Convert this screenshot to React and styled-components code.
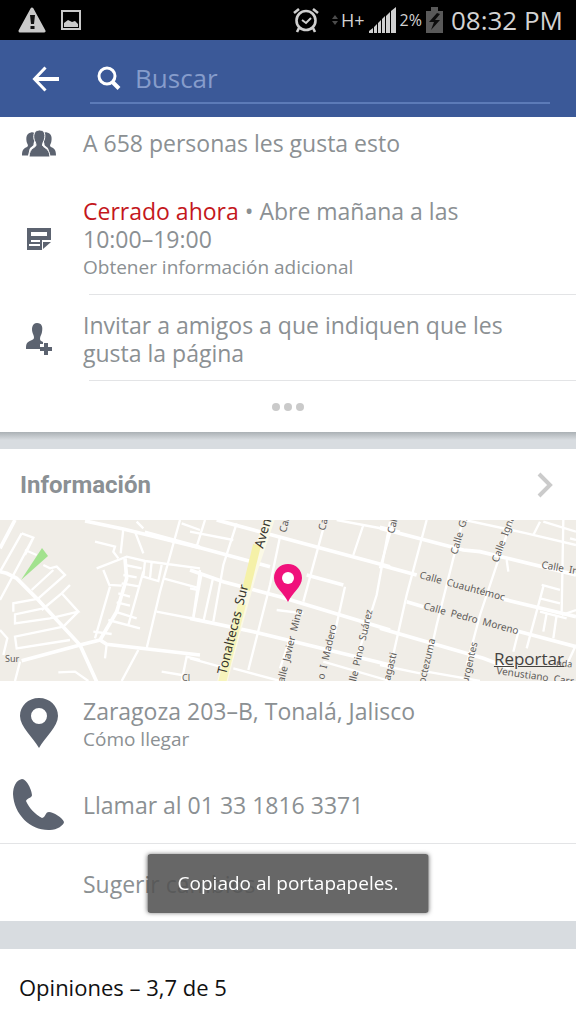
import React from "react";
import styled, { createGlobalStyle } from "styled-components";

const GlobalStyle = createGlobalStyle`
  *, *::before, *::after { box-sizing: border-box; }
  body {
    margin: 0;
    background: #fff;
    color: #8b9093;
    font-family: "Open Sans", "Noto Sans", sans-serif;
  }
  button, input { font: inherit; color: inherit; }
`;

const Screen = styled.div`
  display: flex;
  flex-direction: column;
  min-height: 100vh;
`;

const StatusBar = styled.div`
  display: flex;
  align-items: center;
  justify-content: space-between;
  height: 40px;
  padding: 0 13px 0 18px;
  background: #000;
  color: #d2d2d2;
`;

const StatusGroup = styled.div`
  display: flex;
  align-items: center;
  gap: ${(p) => p.$gap};
`;

const StatusText = styled.span`
  font-size: ${(p) => p.$size};
  line-height: 40px;
  white-space: nowrap;
`;

const Clock = styled(StatusText)`
  margin-left: 4px;
`;

const Toolbar = styled.header`
  display: flex;
  align-items: center;
  height: 77px;
  padding: 0 26px 0 32px;
  background: #3b5998;
  color: #fff;
`;

const IconButton = styled.button`
  display: flex;
  padding: 0;
  border: 0;
  background: none;
  color: ${(p) => p.$color || "inherit"};
`;

const SearchBox = styled.label`
  display: flex;
  flex: 1;
  align-items: center;
  gap: 14px;
  height: 50px;
  margin-left: 30px;
  padding-left: 7px;
  border-bottom: 2px solid #5c7bb8;
`;

const SearchInput = styled.input`
  flex: 1;
  min-width: 0;
  padding: 0;
  border: 0;
  outline: 0;
  background: none;
  color: #fff;
  font-size: 26px;
  line-height: 32px;
  &::placeholder { color: #869ccb; opacity: 1; }
`;

const Card = styled.section`
  background: #fff;
`;

const Separator = styled.div`
  height: ${(p) => p.$height};
  background: ${(p) => (p.$shadow ? "linear-gradient(#abb1b5, #d8dce0 8px)" : "#d8dce0")};
`;

const Row = styled.div`
  display: flex;
  align-items: ${(p) => p.$align || "center"};
  padding: ${(p) => p.$pad || "12px 20px 14px 0"};
`;

const IconCell = styled.div`
  display: flex;
  flex: none;
  justify-content: center;
  width: 77px;
  margin-right: 6px;
  color: #5c6370;
`;

const Lines = styled.div`
  flex: 1;
  min-width: 0;
`;

const Text = styled.p`
  max-width: 450px;
  margin: 0;
  font-size: 23px;
  line-height: 28px;
`;

const Closed = styled.span`
  color: #c4171c;
`;

const Hours = styled.span`
  white-space: nowrap;
`;

const SmallLink = styled.a`
  display: block;
  color: inherit;
  font-size: 19px;
  line-height: 29px;
  text-decoration: none;
`;

const Divider = styled.hr`
  height: 1px;
  margin: 0 0 0 ${(p) => p.$inset || "0"};
  border: 0;
  background: #e3e4e6;
`;

const MoreButton = styled.button`
  display: flex;
  align-items: center;
  justify-content: center;
  gap: 4px;
  width: 100%;
  height: 51px;
  padding: 0;
  border: 0;
  background: none;
`;

const Dot = styled.span`
  width: 8px;
  height: 8px;
  border-radius: 50%;
  background: #cacaca;
`;

const CardHeader = styled.div`
  display: flex;
  align-items: center;
  justify-content: space-between;
  height: 71px;
  padding: 0 22px 0 20px;
`;

const CardTitle = styled.h2`
  margin: 0;
  color: #8b9094;
  font-family: Roboto, sans-serif;
  font-size: 24px;
  font-weight: 700;
  line-height: 28px;
`;

const MapFrame = styled.div`
  position: relative;
  background: #f0ede7;
`;

const MapDrawing = styled.svg`
  display: block;
  width: 100%;
  height: auto;
  font-family: "Noto Sans", sans-serif;
`;

const MapLabel = styled.text`
  white-space: pre;
`;

const ReportLink = styled.a`
  position: absolute;
  right: 12px;
  bottom: 12px;
  color: #44423f;
  font-size: 17px;
  line-height: 20px;
`;

const Opinions = styled.h2`
  margin: 0;
  padding: 24px 19px;
  color: #111;
  font-size: 22px;
  font-weight: 400;
  line-height: 28px;
`;

const Toast = styled.div`
  position: fixed;
  bottom: 111px;
  left: 50%;
  padding: 15px 30px;
  border-radius: 3px;
  background: rgba(82, 82, 82, 0.88);
  box-shadow: 0 0 4px rgba(0, 0, 0, 0.5);
  color: #fff;
  font-size: 19px;
  line-height: 29px;
  white-space: nowrap;
  transform: translateX(-50%);
`;

const WarningIcon = () => (
  <svg width="28" height="28" viewBox="0 0 28 28" aria-hidden="true">
    <path d="M14 3 26 25H2Z" fill="#c9c9c9" stroke="#c9c9c9" strokeWidth="3" strokeLinejoin="round" />
    <path d="M12 9h5l-1 9h-3ZM12.500 20h4v3h-4Z" fill="#111" />
  </svg>
);

const PictureIcon = () => (
  <svg width="20" height="20" viewBox="0 0 20 20" aria-hidden="true">
    <rect x="1" y="1" width="18" height="18" fill="none" stroke="#c9c9c9" strokeWidth="2" />
    <path d="M3 17v-4l4-3 4 2 3-1 3 3v3Z" fill="#c9c9c9" />
  </svg>
);

const AlarmIcon = () => (
  <svg width="26" height="26" viewBox="0 0 26 26" fill="none" stroke="#cfcfcf" aria-hidden="true">
    <circle cx="13" cy="13.500" r="9.500" strokeWidth="2.600" />
    <path d="m9 13 4 3 5-5" strokeWidth="2" />
    <path d="m1 6 5-4M25 6l-5-4M6 21l-2 4M20 21l2 4" strokeWidth="2.600" />
  </svg>
);

const DataIcon = () => (
  <svg width="8" height="12" viewBox="0 0 8 12" fill="#4c4c4c" aria-hidden="true">
    <path d="M1 5 4 1l3 4ZM1 7h6l-3 4Z" />
  </svg>
);

const SignalIcon = () => (
  <svg width="27" height="26" viewBox="0 0 27 26" fill="#d0d0d0" aria-hidden="true">
    <path d="M0 26v-2l4-3v5ZM5 26v-6l3-3v9ZM9 26V16l3-3v13ZM13 26V12l3-3v17ZM17 26V9l4-4v21ZM22 26V4l5-4v26Z" />
  </svg>
);

const BatteryIcon = () => (
  <svg width="17" height="26" viewBox="0 0 17 26" aria-hidden="true">
    <path d="M5 0h7v4h5v22H0V4h5Z" fill="#595959" />
    <path d="m11 6-8 9h5l-3 8 9-10H9l5-6Z" fill="#0c0c0c" />
  </svg>
);

const BackIcon = () => (
  <svg width="28" height="26" viewBox="0 0 28 26" fill="none" stroke="currentColor" strokeWidth="3" aria-hidden="true">
    <path d="M3 13h24" strokeWidth="4" />
    <path d="M13.500 1.500 2.500 13l11 11.500" />
  </svg>
);

const SearchIcon = () => (
  <svg width="24" height="24" viewBox="0 0 24 24" fill="none" stroke="#fff" aria-hidden="true">
    <circle cx="10" cy="10" r="8" strokeWidth="3" />
    <path d="m15.500 16 6.500 6.500" strokeWidth="4" />
  </svg>
);

const GroupIcon = () => (
  <svg width="34" height="27" viewBox="0 0 34 27" fill="currentColor" aria-hidden="true">
    <path d="M9 2.500c4-1 5 3 4 7-.6 2-1.500 3-1.500 5 0 2-4 2-4.500 7l-1 4H0c0-6 2-7 5-8.500 1.500-1 1-2 0-4C3.500 8 4.500 3 9 2.500ZM25 2.500c-4-1-5 3-4 7 .6 2 1.500 3 1.500 5 0 2 4 2 4.500 7l1 4h6c0-6-2-7-5-8.500-1.500-1-1-2 0-4C30.500 8 29.500 3 25 2.500Z" />
    <path d="M17.500 0c5 0 6 4 5 9-.5 2-2 4-2 6 0 3 7 2 7.500 12H7c.5-10 7-9 7-12 0-2-1.500-4-2-6-1-5 1-9 5.500-9Z" stroke="#fff" strokeWidth="1" />
  </svg>
);

const NoteIcon = () => (
  <svg width="24" height="23" viewBox="0 0 24 23" aria-hidden="true">
    <path d="M0 0h24v12h-9v10H0Z" fill="currentColor" />
    <path d="M4 4h16v4H4ZM4 12h9v2H4ZM2 16h11v2H2Z" fill="#fff" />
    <path d="M16 14h8l-8 7Z" fill="currentColor" />
  </svg>
);

const InviteIcon = () => (
  <svg width="28" height="32" viewBox="0 0 28 32" fill="currentColor" aria-hidden="true">
    <path d="M12 0c5 0 6 4 5 9-.5 3-2 4-2 7 0 2 2 2 3 3v2h-3v5H1c0-6 1-7 6-9 3-1 2-4 1-6C6 6 7 0 12 0Z" />
    <path d="M19 20h4v4h4v4h-4v4h-4v-4h-4v-4h4Z" />
  </svg>
);

const PlaceIcon = () => (
  <svg width="40" height="52" viewBox="0 0 40 52" aria-hidden="true">
    <path
      d="M20 1C9 1 1 9 1 19c0 11 13 21 19 32 6-11 19-21 19-32C39 9 31 1 20 1Zm0 10a8 8 0 1 1 0 16 8 8 0 0 1 0-16Z"
      fill="currentColor"
      fillRule="evenodd"
    />
  </svg>
);

const PhoneIcon = () => (
  <svg width="52" height="52" viewBox="0 0 52 52" aria-hidden="true">
    <path
      d="M9 0C3 1 0 8 0 15c1 21 18 37 37 36 7 0 14-5 14-8-1-4-11-10-15-10-4 0-3 5-7 6-7-4-13-10-16-17 1-3 6-3 6-6C19 12 14 0 9 0Z"
      fill="currentColor"
    />
  </svg>
);

const ChevronIcon = () => (
  <svg width="18" height="26" viewBox="0 0 18 26" fill="none" stroke="currentColor" strokeWidth="4" aria-hidden="true">
    <path d="m3 2 11 11L3 24" />
  </svg>
);

// Road geometry is in thirds of a map unit, one list for each third of the map.
const ROADS = [
  {
    x: 0,
    wide: "M0 170 20 175 50 190 110 250 240 390 290 500M0 100 45 15M255 18 370 42 600 98M65 437 240 390 300 375 320 388 600 420M300 375 280 380M300 375 350 290 380 190 375 130",
    thin: "M65 55 100 68 75 120M65 55 0 170M100 68 0 255M75 105 110 120M130 150 150 160 170 155 195 180 115 250M95 225 160 165M185 235 235 290 150 310 45 325 45 298 130 280M185 235 125 285M210 210 185 235M120 250 40 265 40 290M190 335 45 365 50 400 210 375M235 290 190 335M0 345 22 370 10 420M60 440 45 498M265 498 225 470 175 472M285 80 345 95 340 110 355 130M290 160 380 125 435 138 600 160M370 42 362 115M405 50 430 115M430 40 410 20M375 150 425 160M370 180 410 187M365 205 420 215M355 235 390 245M350 262 390 272M345 290 410 310M325 315 420 340M430 170 385 330M310 165 328 210 365 212M330 215 285 370M280 350 335 357M435 138 430 185 475 198 485 150M455 140 450 190M540 15 480 230 440 400M435 50 600 95M450 60 520 80M545 25 600 45M490 190 600 220M600 165 580 305M470 290 600 315M320 388 315 430M415 405 365 498M600 435 560 425 545 498M485 470 545 480",
  },
  {
    x: 570,
    wide: "M0 90 240 155M350 180 460 210M80 15 600 155M0 165 100 200 270 245 600 345M0 310 190 350 600 450",
    thin: "M45 15 20 95M0 50 130 75M140 25 100 150 70 320M35 175 10 310M70 185 40 320M0 220 25 225M270 65 240 210 175 465M400 40 340 260 M520 30 490 120M600 20 560 240 500 430M440 15 600 45M465 215 435 350 410 420M260 285 340 295M0 430 90 455M130 460 270 498M400 440 600 498M300 370 270 460",
  },
  {
    x: 1140,
    wide: "M0 40 250 105 300 110 588 180M0 150 110 180M360 250 588 305M80 260 130 275M400 345 588 395M0 340 310 430 390 460",
    thin: "M40 20 0 160M140 15 80 240 35 440M245 30 170 330 150 420M395 15 300 300 260 450M60 50 0 35M255 15 440 55 588 90M480 20 460 60M550 15 545 290M490 20 588 50M570 70 588 75M380 135 385 170M485 210 540 225M490 215 440 400M480 250 540 265M500 295 490 350M530 300 520 370M480 290 560 310M415 350 400 410M588 390 560 450M588 285 545 300M0 450 120 475M140 470 300 498",
  },
];

const LABELS = [
  { x: 226, y: 155, turn: -76, size: 13, color: "#35342c", text: "Tonaltecas  Sur" },
  { x: 263, y: 29, turn: -74, size: 13, color: "#35342c", text: "Aven" },
  { x: 286, y: 13, turn: -77, size: 10, text: "Calle" },
  { x: 325, y: 11, turn: -77, size: 10, text: "Calle" },
  { x: 394, y: 14, turn: -77, size: 10, text: "Calle" },
  { x: 457, y: 35, turn: -74, size: 10, text: "Calle  G." },
  { x: 498, y: 43, turn: -70, size: 10, text: "Calle  Igna" },
  { x: 284, y: 163, turn: -76, size: 10, text: "alle  Javier  Mina" },
  { x: 324, y: 160, turn: -77, size: 10, text: "o  I  Madero" },
  { x: 356, y: 162, turn: -77, size: 10, text: "lle  Pino  Suárez" },
  { x: 390, y: 161, turn: -76, size: 10, text: "agasti" },
  { x: 425, y: 164, turn: -77, size: 10, text: "octezuma" },
  { x: 468, y: 164, turn: -77, size: 10, text: "urgentes" },
  { x: 419, y: 58, turn: 15, size: 10, text: "Calle  Cuauhtémoc" },
  { x: 423, y: 89, turn: 15, size: 10, text: "Calle  Pedro  Moreno" },
  { x: 541, y: 48, turn: 10, size: 10, text: "Calle  Ind" },
  { x: 496, y: 154, turn: 8, size: 10, text: "Venustiano  Carr" },
  { x: 556, y: 146, turn: 5, size: 9, text: "nda" },
  { x: 5, y: 142, turn: 0, size: 9, text: "Sur" },
  { x: 182, y: 161, turn: 0, size: 9, text: "Cl" },
];

const StreetMap = () => (
  <MapDrawing viewBox="0 0 576 161" role="img" aria-label="Mapa de Tonalá">
    <rect width="576" height="161" fill="#f0ede7" />
    <g transform="scale(0.33333)" fill="none" stroke="#fff">
      {ROADS.map((area) => (
        <g key={area.x} transform={`translate(${area.x} -15)`}>
          <path d={area.thin} strokeWidth="7" />
          <path d={area.wide} strokeWidth="11" />
        </g>
      ))}
    </g>
    <path d="M270 -2 252 52 236 110 222 163" fill="none" stroke="#fbf9e6" strokeWidth="10" />
    <path d="M257 25 246 70" fill="none" stroke="#f5f1a8" strokeWidth="8" />
    <path d="M242 84 222 163" fill="none" stroke="#f7f4bc" strokeWidth="8" />
    <path d="M42 28 48 36 21 60Z" fill="#a2e28e" />
    {LABELS.map((l, i) => (
      <MapLabel
        key={i}
        fontSize={l.size}
        fill={l.color || "#5d5a57"}
        transform={`translate(${l.x} ${l.y}) rotate(${l.turn})`}
      >
        {l.text}
      </MapLabel>
    ))}
    <path d="M288 44c-8 0-14 6-14 14 0 9 10 15 14 24 4-9 14-15 14-24 0-8-6-14-14-14Z" fill="#f0117b" />
    <circle cx="288" cy="58" r="6" fill="#fff" />
  </MapDrawing>
);

export default function App() {
  return (
    <Screen>
      <GlobalStyle />
      <StatusBar>
        <StatusGroup $gap="15px">
          <WarningIcon />
          <PictureIcon />
        </StatusGroup>
        <StatusGroup $gap="12px">
          <AlarmIcon />
          <StatusGroup $gap="4px">
            <StatusGroup $gap="2px">
              <DataIcon />
              <StatusText $size="18px">H+</StatusText>
            </StatusGroup>
            <SignalIcon />
            <StatusText $size="16px">2%</StatusText>
            <BatteryIcon />
            <Clock $size="26px">08:32 PM</Clock>
          </StatusGroup>
        </StatusGroup>
      </StatusBar>

      <Toolbar>
        <IconButton type="button" aria-label="Atrás">
          <BackIcon />
        </IconButton>
        <SearchBox>
          <SearchIcon />
          <SearchInput type="text" placeholder="Buscar" aria-label="Buscar" />
        </SearchBox>
      </Toolbar>

      <main>
        <Card>
          <Row>
            <IconCell><GroupIcon /></IconCell>
            <Lines><Text>A 658 personas les gusta esto</Text></Lines>
          </Row>
          <Row $pad="26px 20px 12px 0">
            <IconCell><NoteIcon /></IconCell>
            <Lines>
              <Text><Closed>Cerrado ahora</Closed> • Abre mañana a las <Hours>10:00–19:00</Hours></Text>
              <SmallLink href="#horario">Obtener información adicional</SmallLink>
            </Lines>
          </Row>
          <Divider $inset="89px" />
          <Row $pad="16px 20px 13px 0">
            <IconCell><InviteIcon /></IconCell>
            <Lines><Text>Invitar a amigos a que indiquen que les gusta la página</Text></Lines>
          </Row>
          <Divider $inset="89px" />
          <MoreButton type="button" aria-label="Más">
            <Dot /><Dot /><Dot />
          </MoreButton>
        </Card>

        <Separator $height="17px" $shadow />

        <Card>
          <CardHeader>
            <CardTitle>Información</CardTitle>
            <IconButton type="button" aria-label="Ver información" $color="#cbcbcb">
              <ChevronIcon />
            </IconButton>
          </CardHeader>
          <MapFrame>
            <StreetMap />
            <ReportLink href="#reportar">Reportar</ReportLink>
          </MapFrame>
          <Row $pad="16px 20px 15px 0" $align="flex-start">
            <IconCell><PlaceIcon /></IconCell>
            <Lines>
              <Text>Zaragoza 203–B, Tonalá, Jalisco</Text>
              <SmallLink href="#ruta">Cómo llegar</SmallLink>
            </Lines>
          </Row>
          <Row $pad="10px 20px 12px 0">
            <IconCell><PhoneIcon /></IconCell>
            <Lines><Text>Llamar al 01 33 1816 3371</Text></Lines>
          </Row>
          <Divider />
          <Row $pad="26px 20px 23px 0">
            <IconCell />
            <Lines><Text>Sugerir cambios</Text></Lines>
          </Row>
        </Card>

        <Separator $height="28px" />

        <Card>
          <Opinions>Opiniones – 3,7 de 5</Opinions>
        </Card>
      </main>

      <Toast role="status">Copiado al portapapeles.</Toast>
    </Screen>
  );
}
